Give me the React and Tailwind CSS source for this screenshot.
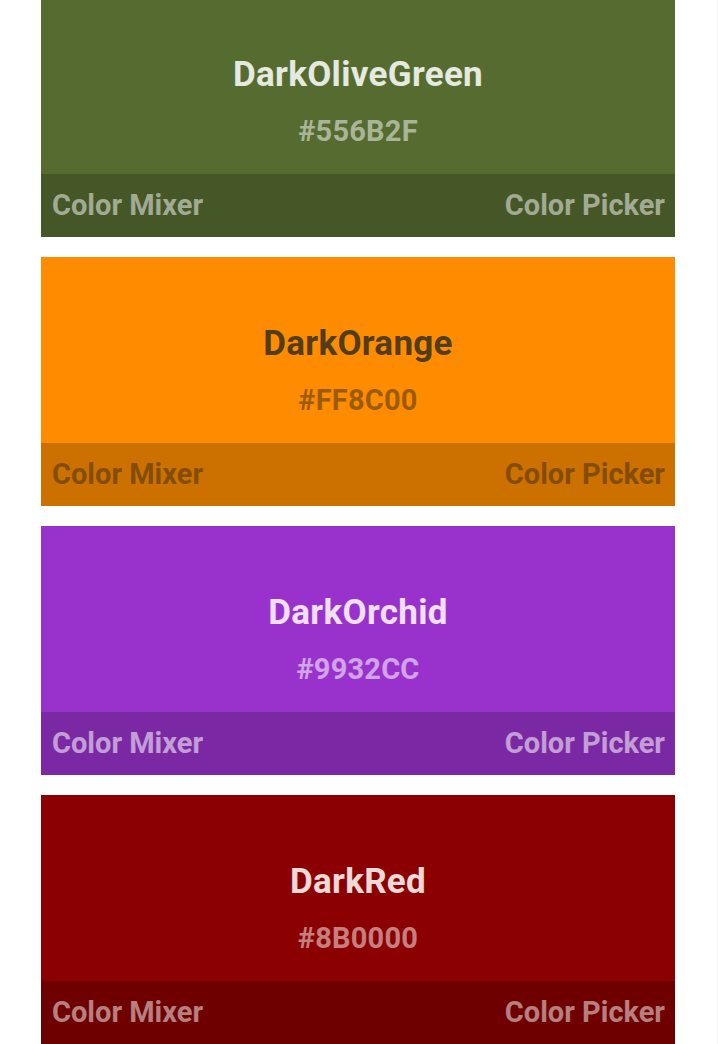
import React from 'react';

const colors = [
  {
    name: 'DarkOliveGreen',
    hex: '#556B2F',
    bg: 'bg-[#556b2f]',
    foot: 'bg-[#455627]',
    title: 'text-white/85',
    sub: 'text-white/50',
  },
  {
    name: 'DarkOrange',
    hex: '#FF8C00',
    bg: 'bg-[#ff8c00]',
    foot: 'bg-[#cc7000]',
    title: 'text-[#513c1c]',
    sub: 'text-[#3a2a10]/50',
  },
  {
    name: 'DarkOrchid',
    hex: '#9932CC',
    bg: 'bg-[#9932cc]',
    foot: 'bg-[#7a28a3]',
    title: 'text-white/85',
    sub: 'text-white/55',
  },
  {
    name: 'DarkRed',
    hex: '#8B0000',
    bg: 'bg-[#8b0000]',
    foot: 'bg-[#6f0000]',
    title: 'text-white/85',
    sub: 'text-white/50',
  },
];

function ColorCard({ c }) {
  return (
    <div className={'w-[634px] flex flex-col ' + c.bg}>
      <div className="h-[186px] flex flex-col items-center pt-[55px]">
        <div className={'text-[35px] leading-[64px] font-bold tracking-[0.3px] ' + c.title}>{c.name}</div>
        <div className={'text-[29px] leading-[48px] font-bold tracking-[0.2px] ' + c.sub}>{c.hex}</div>
      </div>
      <div className={'h-[63px] flex items-center justify-between pl-[11px] pr-[10px] text-[29px] font-bold ' + c.foot + ' ' + c.sub}>
        <span>Color Mixer</span>
        <span>Color Picker</span>
      </div>
    </div>
  );
}

export default function App() {
  return (
    <div
      className="w-[718px] h-[1044px] overflow-hidden bg-white border-r border-gray-100"
      style={{ fontFamily: 'Roboto, "Noto Sans", sans-serif' }}
    >
      <div className="mt-[-12px] ml-[41px] flex flex-col gap-[20px]">
        {colors.map((c) => (
          <ColorCard key={c.name} c={c} />
        ))}
      </div>
    </div>
  );
}
